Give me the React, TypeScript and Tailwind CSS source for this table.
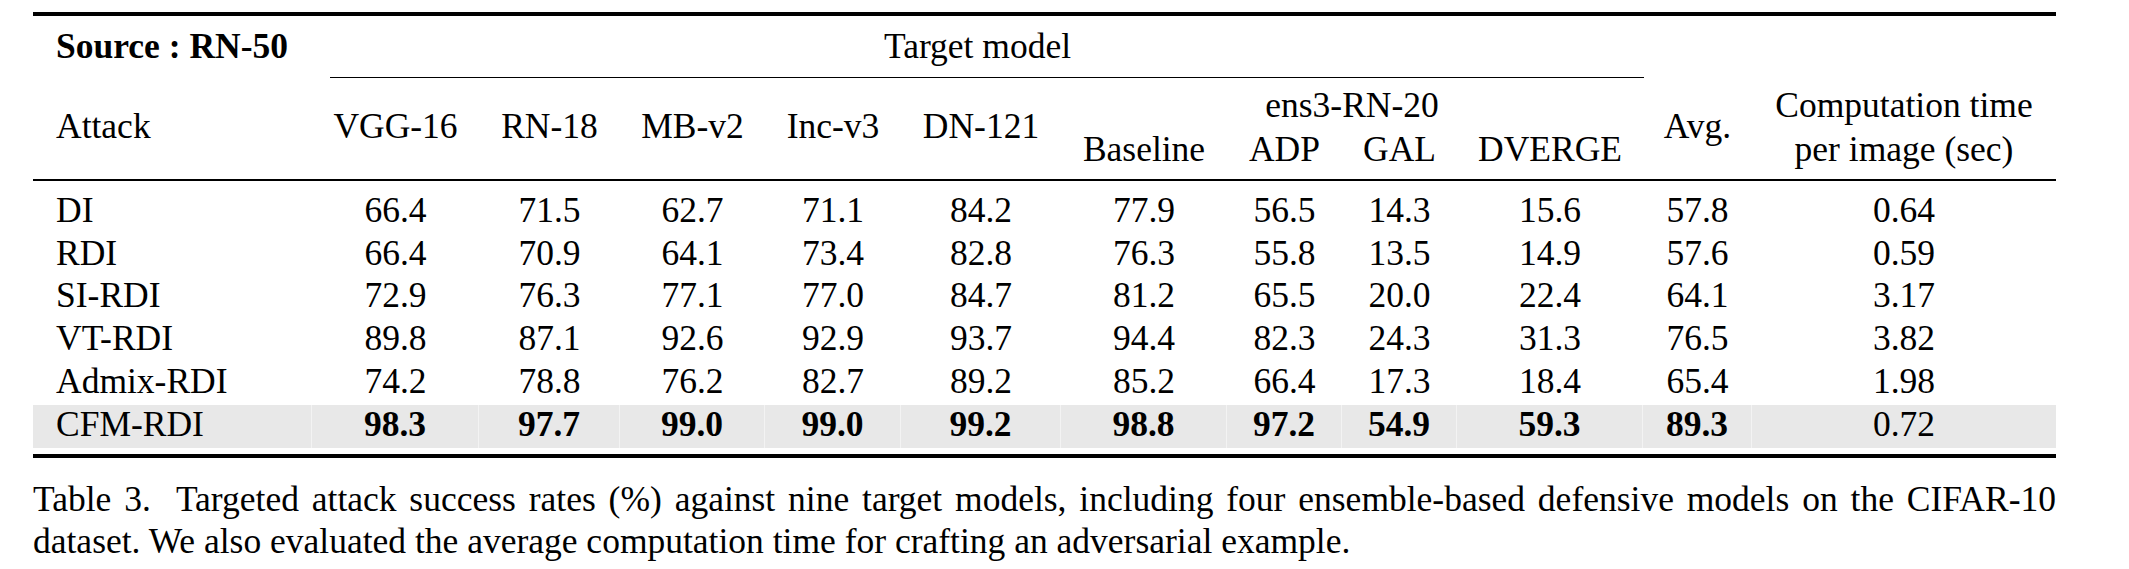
import React from "react";

const cols =
  "grid grid-cols-[279px_167px_141px_145px_136px_160px_166px_115px_115px_186px_109px_304px]";

interface Row {
  name: string;
  values: string[];
  time: string;
  best?: boolean;
}

const rows: Row[] = [
  { name: "DI", values: ["66.4", "71.5", "62.7", "71.1", "84.2", "77.9", "56.5", "14.3", "15.6", "57.8"], time: "0.64" },
  { name: "RDI", values: ["66.4", "70.9", "64.1", "73.4", "82.8", "76.3", "55.8", "13.5", "14.9", "57.6"], time: "0.59" },
  { name: "SI-RDI", values: ["72.9", "76.3", "77.1", "77.0", "84.7", "81.2", "65.5", "20.0", "22.4", "64.1"], time: "3.17" },
  { name: "VT-RDI", values: ["89.8", "87.1", "92.6", "92.9", "93.7", "94.4", "82.3", "24.3", "31.3", "76.5"], time: "3.82" },
  { name: "Admix-RDI", values: ["74.2", "78.8", "76.2", "82.7", "89.2", "85.2", "66.4", "17.3", "18.4", "65.4"], time: "1.98" },
  { name: "CFM-RDI", values: ["98.3", "97.7", "99.0", "99.0", "99.2", "98.8", "97.2", "54.9", "59.3", "89.3"], time: "0.72", best: true },
];

const singleModels = ["VGG-16", "RN-18", "MB-v2", "Inc-v3", "DN-121"];
const ensembleModels = ["Baseline", "ADP", "GAL", "DVERGE"];

export default function App() {
  return (
    <div className="min-h-[569px] w-[2129px] bg-white text-black font-['Liberation_Serif','Times_New_Roman',serif] text-[35.5px]">
      <div className="ml-[33px] w-[2023px] pt-[12px]">
        {/* top rule */}
        <div className="h-[4px] bg-black" />

        {/* header, first line */}
        <div className="grid h-[61px] grid-cols-[279px_1331px_413px] pt-[9px] leading-[42.6px]">
          <div className="pl-[23px] font-bold">Source : RN-50</div>
          <div className="text-center">Target model</div>
          <div />
        </div>
        <div className="ml-[297px] h-px w-[1314px] bg-black" />

        {/* header, second line */}
        <div className={`${cols} h-[101px] leading-[44px]`}>
          <div className="pl-[23px] pt-[26px]">Attack</div>
          {singleModels.map((m) => (
            <div key={m} className="pt-[26px] text-center">
              {m}
            </div>
          ))}
          <div className="col-span-4 pt-[5px]">
            <div className="text-center">ens3-RN-20</div>
            <div className="grid grid-cols-[166px_115px_115px_186px]">
              {ensembleModels.map((m) => (
                <div key={m} className="text-center">
                  {m}
                </div>
              ))}
            </div>
          </div>
          <div className="pt-[26px] text-center">Avg.</div>
          <div className="pt-[5px] text-center">
            <div>Computation time</div>
            <div>per image (sec)</div>
          </div>
        </div>
        <div className="h-[2px] bg-black" />

        {/* body */}
        <div className="mt-[9.8px]">
          {rows.map((r) => (
            <div
              key={r.name}
              className={`${cols} h-[42.84px] leading-[38px] ${r.best ? "bg-[#e8e8e8]" : ""}`}
            >
              <div className={`pl-[23px] ${r.best ? "border-r border-[#f3f3f3]" : ""}`}>{r.name}</div>
              {r.values.map((v, i) => (
                <div
                  key={i}
                  className={`text-center ${r.best ? "border-r border-[#f3f3f3] font-bold" : ""}`}
                >
                  {v}
                </div>
              ))}
              <div className="text-center">{r.time}</div>
            </div>
          ))}
        </div>

        {/* bottom rule */}
        <div className="mt-[6px] h-[4px] bg-black" />

        {/* caption */}
        <div className="mt-[20px] leading-[42px]">
          <div className="text-justify [text-align-last:justify]">
            Table 3.&nbsp; Targeted attack success rates (%) against nine target models, including four
            ensemble-based defensive models on the CIFAR-10
          </div>
          <div>dataset. We also evaluated the average computation time for crafting an adversarial example.</div>
        </div>
      </div>
    </div>
  );
}
